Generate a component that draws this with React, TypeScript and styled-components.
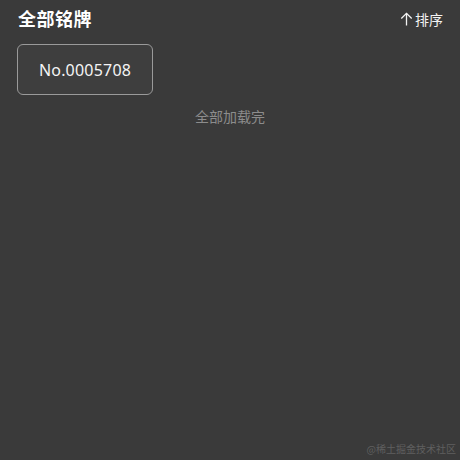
import styled, {createGlobalStyle} from "styled-components";

const GlobalStyle = createGlobalStyle`
  html, body {
    margin: 0;
    padding: 0;
    background: #3a3a3a;
  }
  body {
    font-family: "Noto Sans", "Noto Sans CJK SC", sans-serif;
  }
`

const Page = styled.div`
  width: 460px;
  height: 460px;
  position: relative;
  box-sizing: border-box;
  padding: 0 17px;
  background: #3a3a3a;
  color: #ffffff;
  overflow: hidden;
`

const Header = styled.div`
  display: flex;
  align-items: center;
  justify-content: space-between;
  height: 38px;
`

const Title = styled.h1`
  margin: 0 0 0 1px;
  font-size: 18px;
  font-weight: 700;
  line-height: 1;
  letter-spacing: 0.5px;
`

const SortButton = styled.button`
  display: flex;
  align-items: center;
  gap: 2px;
  padding: 0;
  border: none;
  background: none;
  color: #f2f2f2;
  font-family: "Noto Sans CJK SC", sans-serif;
  font-size: 14px;
  cursor: pointer;
`

const BadgeList = styled.div`
  display: flex;
  flex-wrap: wrap;
  gap: 10px;
  margin-top: 6px;
`

const Badge = styled.div`
  width: 136px;
  height: 51px;
  box-sizing: border-box;
  display: flex;
  align-items: center;
  justify-content: center;
  border: 1px solid #9a9a9a;
  border-radius: 6px;
  background: #3e3e3e;
  font-size: 16px;
  letter-spacing: 0.2px;
  color: #f4f4f4;
`

const EndTip = styled.p`
  margin: 11px 0 0;
  text-align: center;
  font-family: "Noto Sans CJK SC", sans-serif;
  font-size: 14px;
  color: #8c8c8c;
`

const Watermark = styled.span`
  position: absolute;
  right: 4px;
  bottom: 4px;
  font-family: "Noto Sans CJK SC", serif;
  font-size: 10px;
  color: #5f5f5f;
`

const badges = ["No.0005708"];

const ArrowUp = () => (
    <svg width="13" height="14" viewBox="0 0 13 14" fill="none" stroke="#f2f2f2" strokeWidth="1.3">
        <path d="M6.5 13.5V1.3"/>
        <path d="M1.3 6.5L6.5 1.3L11.7 6.5"/>
    </svg>
)

const App = () => {
    return (
        <>
            <GlobalStyle/>
            <Page>
                <Header>
                    <Title>全部铭牌</Title>
                    <SortButton>
                        <ArrowUp/>
                        排序
                    </SortButton>
                </Header>
                <BadgeList>
                    {badges.map(no => <Badge key={no}>{no}</Badge>)}
                </BadgeList>
                <EndTip>全部加载完</EndTip>
                <Watermark>@稀土掘金技术社区</Watermark>
            </Page>
        </>
    )
}

export default App;
